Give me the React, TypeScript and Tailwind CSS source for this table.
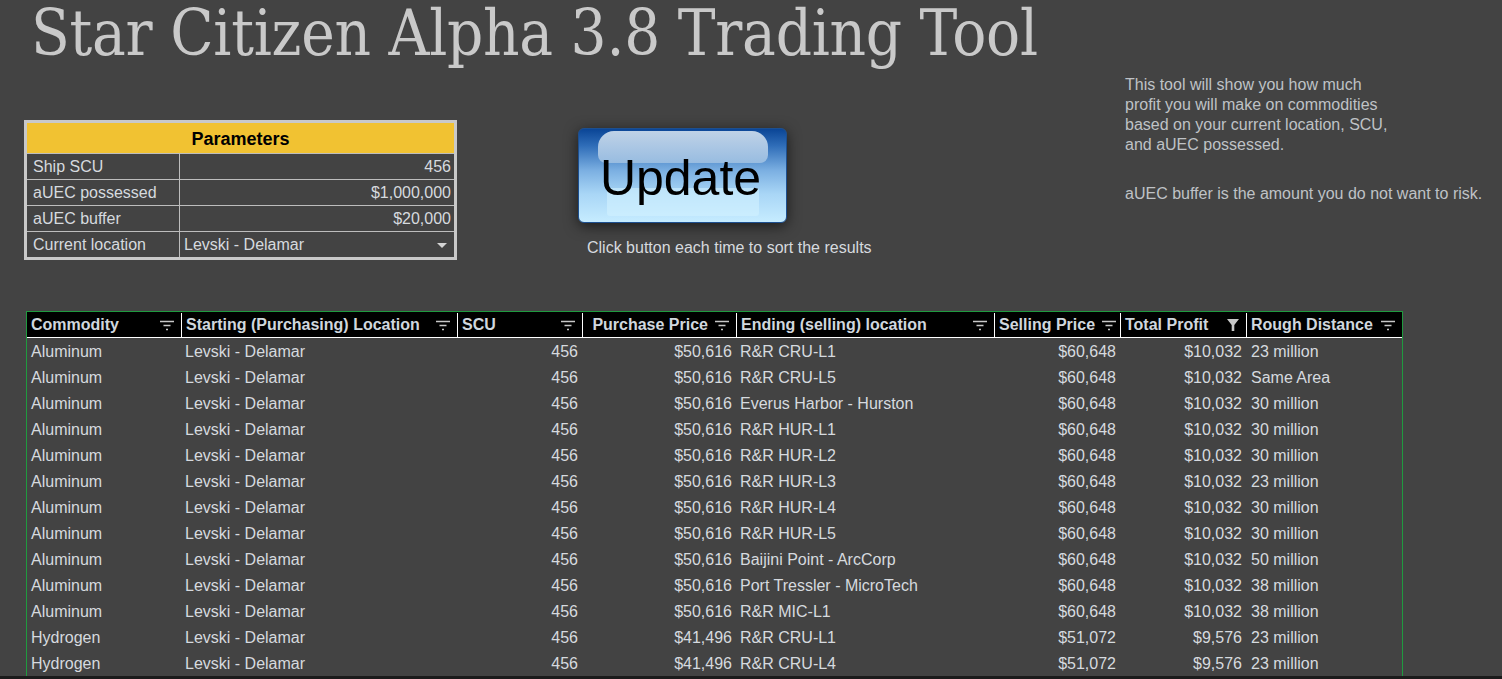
import React from 'react';

type Row = {
  commodity: string;
  start: string;
  scu: string;
  buy: string;
  end: string;
  sell: string;
  profit: string;
  distance: string;
};

const al = (end: string, distance: string): Row => ({
  commodity: 'Aluminum',
  start: 'Levski - Delamar',
  scu: '456',
  buy: '$50,616',
  end,
  sell: '$60,648',
  profit: '$10,032',
  distance,
});

const hy = (end: string, distance: string): Row => ({
  commodity: 'Hydrogen',
  start: 'Levski - Delamar',
  scu: '456',
  buy: '$41,496',
  end,
  sell: '$51,072',
  profit: '$9,576',
  distance,
});

const rows: Row[] = [
  al('R&R CRU-L1', '23 million'),
  al('R&R CRU-L5', 'Same Area'),
  al('Everus Harbor - Hurston', '30 million'),
  al('R&R HUR-L1', '30 million'),
  al('R&R HUR-L2', '30 million'),
  al('R&R HUR-L3', '23 million'),
  al('R&R HUR-L4', '30 million'),
  al('R&R HUR-L5', '30 million'),
  al('Baijini Point - ArcCorp', '50 million'),
  al('Port Tressler - MicroTech', '38 million'),
  al('R&R MIC-L1', '38 million'),
  hy('R&R CRU-L1', '23 million'),
  hy('R&R CRU-L4', '23 million'),
];

const cols = 'grid grid-cols-[154px_276px_125px_154px_258px_126px_126px_156px]';

function FilterIcon() {
  return (
    <svg width="16" height="11" viewBox="0 0 16 11" className="shrink-0">
      <path d="M1 1.5h14M4.5 5.5h7M7 9.5h2" stroke="#c8c8c8" strokeWidth="1.5" />
    </svg>
  );
}

function ActiveFilterIcon() {
  return (
    <svg width="14" height="14" viewBox="0 0 14 14" className="shrink-0">
      <path d="M1 1h12L8.3 7v6H5.7V7z" fill="#c8c8c8" />
    </svg>
  );
}

function HeaderCell({
  label,
  first,
  active,
  end,
}: {
  label: string;
  first?: boolean;
  active?: boolean;
  end?: boolean;
}) {
  return (
    <div
      className={`flex items-center gap-[6px] pl-1 pr-[6px] ${end ? 'justify-end' : 'justify-between'} ${first ? '' : 'border-l border-white'}`}
    >
      <span className="whitespace-nowrap">{label}</span>
      {active ? <ActiveFilterIcon /> : <FilterIcon />}
    </div>
  );
}

function Parameters() {
  const items: [string, React.ReactNode][] = [
    ['Ship SCU', <span className="block text-right">456</span>],
    ['aUEC possessed', <span className="block text-right">$1,000,000</span>],
    ['aUEC buffer', <span className="block text-right">$20,000</span>],
    [
      'Current location',
      <span className="flex items-center justify-between">
        Levski - Delamar
        <span className="mr-[4px] h-0 w-0 border-x-[5px] border-t-[5px] border-x-transparent border-t-[#d4d4d4]" />
      </span>,
    ],
  ];
  return (
    <div className="w-[433px] border-[3px] border-[#c9c9c9] bg-[#434343]">
      <div className="flex h-[30px] items-center justify-center pt-[2px] bg-[#f1c232] text-[18px] font-bold text-black">
        Parameters
      </div>
      {items.map(([k, v]) => (
        <div key={k} className="grid h-[26px] grid-cols-[153px_1fr] border-t border-[#bdbdbd]">
          <div className="flex items-center border-r border-[#bdbdbd] pl-[6px] pt-px">{k}</div>
          <div className="flex items-center pl-[4px] pr-[3px] pt-px">
            <div className="w-full">{v}</div>
          </div>
        </div>
      ))}
    </div>
  );
}

function UpdateButton() {
  return (
    <div className="relative h-[95px] w-[209px] rounded-[6px] border border-[#1d4f8f] bg-[linear-gradient(to_bottom,#0a4596_0%,#2f6db8_18%,#7cb0e2_45%,#a9d6f6_70%,#c6ecff_100%)] shadow-[0_3px_14px_rgba(0,0,0,0.6)]">
      <div className="absolute left-[19px] right-[18px] top-[2px] h-[32px] rounded-t-[16px] rounded-b-[8px] bg-[linear-gradient(to_bottom,#d3e1ef,#9ec0e2)] opacity-90" />
      <div className="absolute bottom-[6px] left-[28px] right-[27px] h-[28px] rounded-[3px] bg-[#d2f1ff]/60" />
      <div className="relative flex h-full items-center justify-center pr-[4px] pt-[4px] text-[50px] leading-none text-black">
        Update
      </div>
    </div>
  );
}

export default function App() {
  return (
    <div className="h-[679px] w-full overflow-hidden bg-[#434343] font-['Liberation_Sans',Arial,sans-serif] text-[16px] text-[#d6dadf]">
      <div className="h-[72px] pl-[31px]">
        <h1 className="font-['DejaVu_Serif_Condensed','DejaVu_Serif',serif] text-[63px] leading-[68px] tracking-[-0.25px] text-[#c9c9c9] font-stretch-condensed">
          Star Citizen Alpha 3.8 Trading Tool
        </h1>
      </div>

      <div className="flex h-[239px] items-start">
        <div className="ml-[24px] mt-[48px] shrink-0">
          <Parameters />
        </div>
        <div className="ml-[121px] mt-[56px] flex w-[209px] shrink-0 flex-col items-start">
          <UpdateButton />
          <p className="ml-[9px] mt-[15px] whitespace-nowrap leading-[20px]">
            Click button each time to sort the results
          </p>
        </div>
        <div className="ml-[338px] mt-[3px] shrink-0 leading-[20px] text-[#bfc2c6]">
          <p>This tool will show you how much</p>
          <p>profit you will make on commodities</p>
          <p>based on your current location, SCU,</p>
          <p>and aUEC possessed.</p>
          <p className="mt-[29px] whitespace-nowrap">aUEC buffer is the amount you do not want to risk.</p>
        </div>
      </div>

      <div className="ml-[26px] w-[1377px] border-x border-t border-[#1f9a3f]">
        <div className={`${cols} h-[26px] border-b border-white bg-black pt-px font-bold text-[#d0d7de]`}>
          <HeaderCell label="Commodity" first />
          <HeaderCell label="Starting (Purchasing) Location" />
          <HeaderCell label="SCU" />
          <HeaderCell label="Purchase Price" end />
          <HeaderCell label="Ending (selling) location" />
          <HeaderCell label="Selling Price" />
          <HeaderCell label="Total Profit" active />
          <HeaderCell label="Rough Distance" />
        </div>
        {rows.map((r, i) => (
          <div key={i} className={`${cols} h-[26px] items-center whitespace-nowrap pt-px`}>
            <div className="pl-1">{r.commodity}</div>
            <div className="pl-[4px]">{r.start}</div>
            <div className="pr-[4px] text-right">{r.scu}</div>
            <div className="pr-[4px] text-right">{r.buy}</div>
            <div className="pl-[4px]">{r.end}</div>
            <div className="pr-[4px] text-right">{r.sell}</div>
            <div className="pr-[4px] text-right">{r.profit}</div>
            <div className="pl-[5px]">{r.distance}</div>
          </div>
        ))}
      </div>
      <div className="h-[3px] bg-[#1b1b1b]" />
    </div>
  );
}
